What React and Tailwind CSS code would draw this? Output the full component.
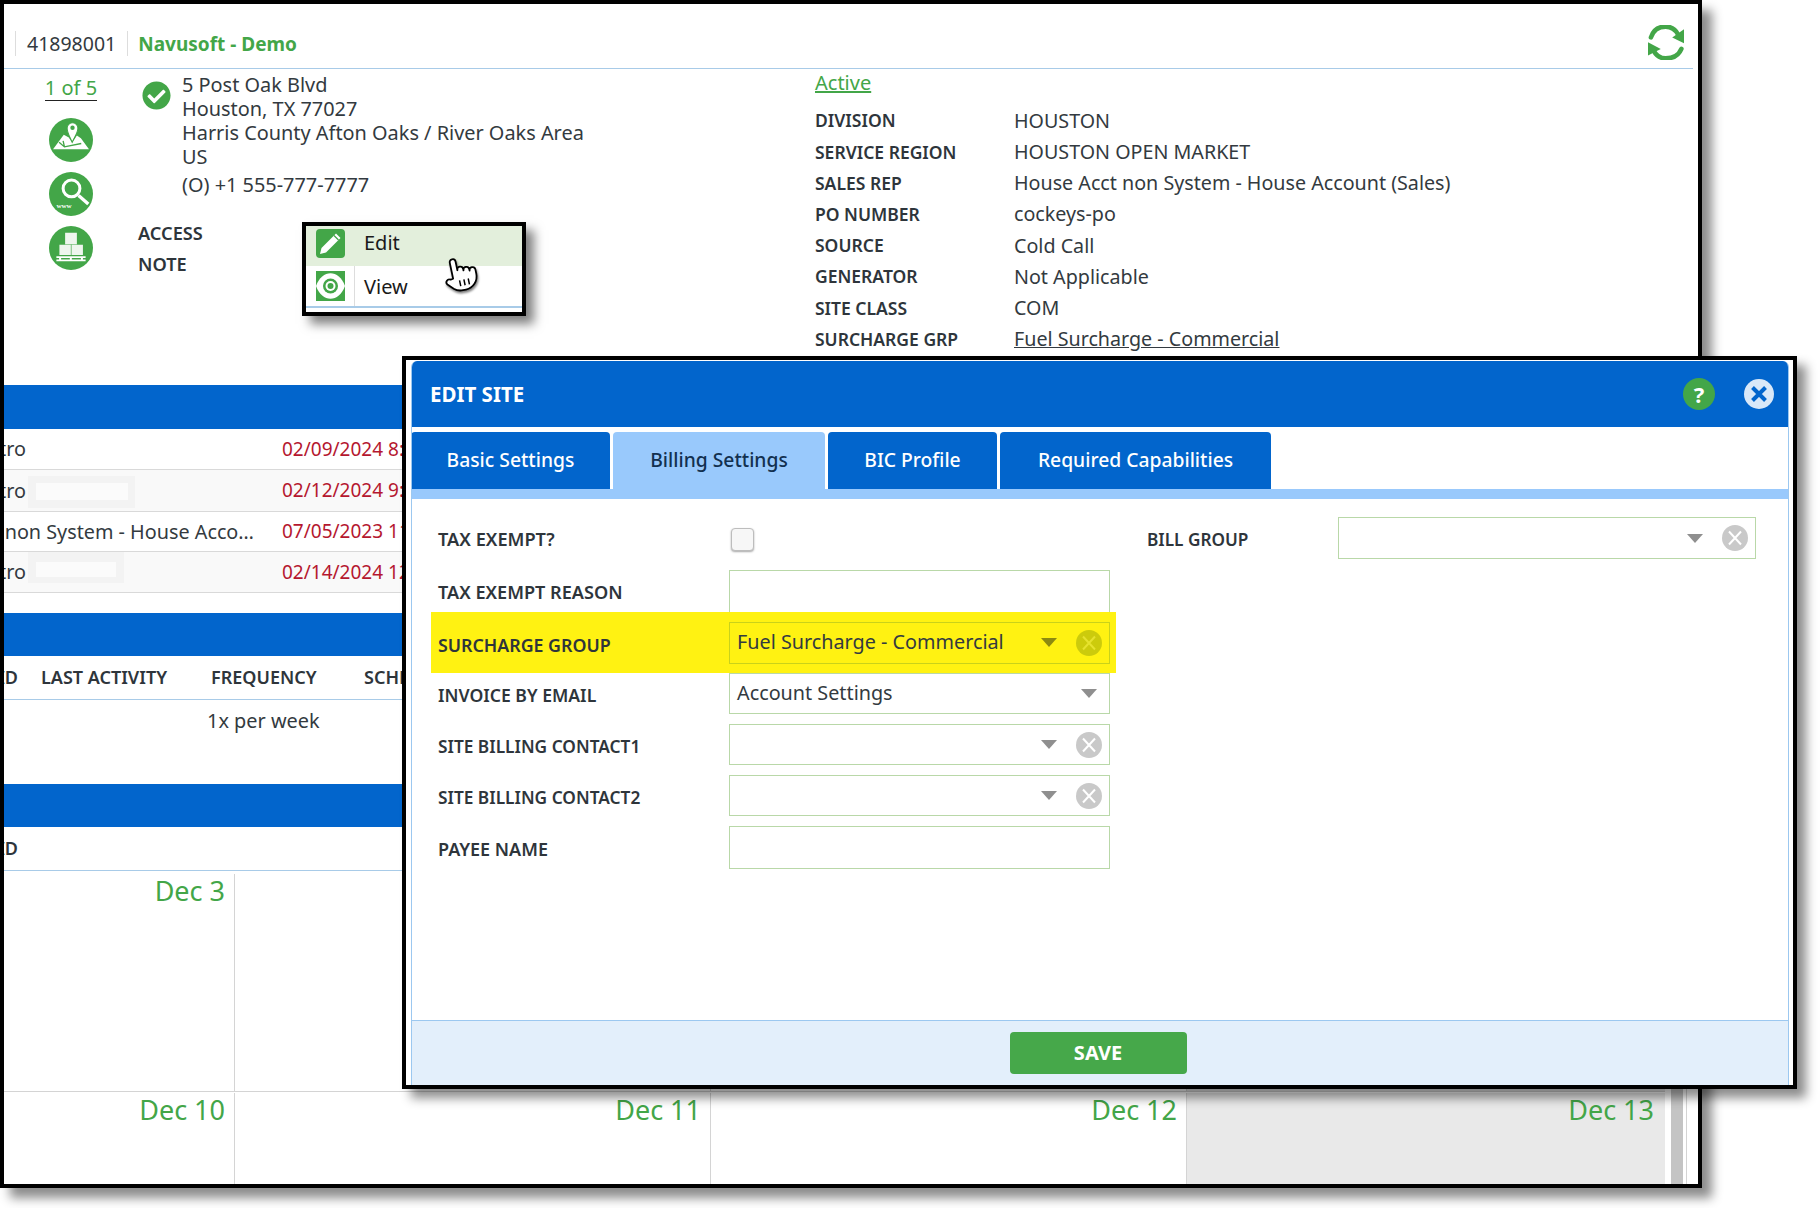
import { FaCheckCircle } from 'react-icons/fa'

const details = [
  ['DIVISION', 'HOUSTON'],
  ['SERVICE REGION', 'HOUSTON OPEN MARKET'],
  ['SALES REP', 'House Acct non System - House Account (Sales)'],
  ['PO NUMBER', 'cockeys-po'],
  ['SOURCE', 'Cold Call'],
  ['GENERATOR', 'Not Applicable'],
  ['SITE CLASS', 'COM'],
  ['SURCHARGE GRP', 'Fuel Surcharge - Commercial'],
]

function Arrow({ color = '#8f8f8f' }) {
  return (
    <svg width="16" height="9" viewBox="0 0 16 9" className="shrink-0">
      <path d="M0 0h16L8 9z" fill={color} />
    </svg>
  )
}

function ClearIcon({ bg = '#c9c9c9', fg = '#ffffff' }) {
  return (
    <svg width="26" height="26" viewBox="0 0 26 26" className="shrink-0">
      <circle cx="13" cy="13" r="13" fill={bg} />
      <path d="M7 6.500l12 13M19 6.500l-12 13" stroke={fg} strokeWidth="2" />
    </svg>
  )
}

function RefreshIcon() {
  return (
    <svg width="36" height="35" viewBox="0 0 110 105">
      <path d="M9 37C16 14 33 4 54 4c16 0 29 7 38 24" fill="none" stroke="#43a648" strokeWidth="14" strokeLinecap="round" />
      <path d="M110 12v43L74 37z" fill="#43a648" />
      <path d="M102 72C94 92 76 101 54 101c-16 0-29-8-37-24" fill="none" stroke="#43a648" strokeWidth="14" strokeLinecap="round" />
      <path d="M0 52v40l39-20z" fill="#43a648" />
    </svg>
  )
}

function MapIcon() {
  return (
    <svg width="44" height="44" viewBox="0 0 131 131">
      <circle cx="65.500" cy="65.500" r="65.500" fill="#43a648" />
      <path d="M12 93L44 50l15 8 10 16 14-22 12 8 24 33z" fill="#fff" />
      <path d="M30 72l16 14 50-10M46 86l-4-18" fill="none" stroke="#43a648" strokeWidth="4" />
      <path d="M69 72C62 56 54 45 54 30a16 16 0 0 1 32 0c0 15-10 26-17 42z" fill="#fff" stroke="#43a648" strokeWidth="3" />
      <circle cx="70" cy="29" r="6.500" fill="#43a648" />
    </svg>
  )
}

function WebSearchIcon() {
  return (
    <svg width="44" height="44" viewBox="0 0 131 131">
      <circle cx="65.500" cy="65.500" r="65.500" fill="#43a648" />
      <circle cx="67" cy="49" r="25" fill="none" stroke="#fff" strokeWidth="9" />
      <path d="M88 70l29 25" stroke="#fff" strokeWidth="10" />
      <text x="22" y="106" fontSize="21" fontWeight="700" fill="#fff" fontFamily="'Liberation Serif', serif">www</text>
    </svg>
  )
}

function PalletIcon() {
  return (
    <svg width="44" height="44" viewBox="0 0 131 131">
      <circle cx="65.500" cy="65.500" r="65.500" fill="#43a648" />
      <path d="M48 20h35v34H48zM31 56h34v30H31zM67 56h34v30H67z" fill="#eef6ee" />
      <path d="M22 90h87v5H22zM30 95h6v5h-6zM62 95h6v5h-6zM95 95h6v5h-6zM22 100h87v5H22z" fill="#fff" />
    </svg>
  )
}

function PencilIcon() {
  return (
    <svg width="29" height="29" viewBox="0 0 29 29">
      <rect width="29" height="29" rx="4" fill="#43a648" />
      <path d="M4 25l1.500-6L20 4.500 24.500 9 10 23.500z" fill="#fff" />
      <path d="M18 6.500L22.500 11" stroke="#43a648" strokeWidth="1.300" />
    </svg>
  )
}

function EyeIcon() {
  return (
    <svg width="29" height="30" viewBox="0 0 29 30">
      <rect width="29" height="30" fill="#43a648" />
      <path d="M0 15C6-2 23-2 29 15 23 32 6 32 0 15z" fill="#fff" />
      <circle cx="14.500" cy="15" r="7.500" fill="#43a648" />
      <circle cx="14.500" cy="15" r="5" fill="#fff" />
      <circle cx="14.500" cy="15" r="3" fill="#43a648" />
    </svg>
  )
}

function HandCursor() {
  return (
    <svg width="37" height="44" viewBox="0 0 25 27" className="absolute left-[136px] top-[27px] drop-shadow-[1px_2px_1px_rgba(0,0,0,0.5)]">
      <g transform="rotate(-12 12 13)">
        <path d="M7 15V4a2 2 0 0 1 4 0v6a2 2 0 0 1 4 0v1a2 2 0 0 1 4 0v1a2 2 0 0 1 4 0v3a9 9 0 0 1-9 9h-2c-2.800 0-4.500-.900-6-2.300l-3.600-3.600a2 2 0 0 1 2.800-2.800z" fill="#fff" stroke="#000" strokeWidth="1.200" strokeLinejoin="round" />
        <path d="M11 17v4M14 17v4M17 17v4" stroke="#000" strokeWidth="1" />
      </g>
    </svg>
  )
}

function PopupMenu() {
  return (
    <div className="absolute left-[298px] top-[218px] z-10 h-[94px] w-[224px] border-4 border-black bg-white shadow-[8px_8px_10px_rgba(0,0,0,0.5)]">
      <div className="flex h-[40px] items-start bg-[#e3efdc] pl-[10px] pt-[3px]">
        <PencilIcon />
        <span className="ml-[19px] text-[20px] leading-[27px] text-[#1a1a1a]">Edit</span>
      </div>
      <div className="flex h-[42px] items-center border-b-2 border-[#a8cbe8] pl-[10px]">
        <EyeIcon />
        <span className="ml-[9px] flex h-full items-center border-l border-[#dddddd] pl-[9px] pt-[2px] text-[20px] text-[#1a1a1a]">View</span>
      </div>
      <HandCursor />
    </div>
  )
}

function TopSection() {
  return (
    <div className="flex h-[316px] text-[#333a40]">
      <div className="flex w-[134px] shrink-0 flex-col items-center pt-[7px]">
        <a className="border-b border-[#222222] text-[20px] leading-[24px] text-[#43a648]">1 of 5</a>
        <div className="mt-[17px] flex flex-col gap-[10px]">
          <MapIcon />
          <WebSearchIcon />
          <PalletIcon />
        </div>
      </div>
      <div className="w-[677px] shrink-0 pt-[4px]">
        <div className="flex">
          <FaCheckCircle className="ml-[4px] mt-[8px] shrink-0 text-[29px] text-[#43a648]" />
          <div className="ml-[11px] text-[19.9px] leading-[24px]">
            <div>5 Post Oak Blvd</div>
            <div>Houston, TX 77027</div>
            <div>Harris County Afton Oaks / River Oaks Area</div>
            <div>US</div>
            <div className="mt-[4px]">(O) +1 555-777-7777</div>
          </div>
        </div>
        <div className="mt-[21px] text-[18.2px] font-semibold leading-[31px] text-[#2e353b]">
          <div>ACCESS</div>
          <div>NOTE</div>
        </div>
      </div>
      <div className="flex-1">
        <div className="-mt-px flex h-[30px] items-center">
          <a className="text-[20px] text-[#43a648] underline">Active</a>
        </div>
        <div className="mt-[7px]">
          {details.map(([label, value], i) => (
            <div key={label} className="flex h-[31.2px] items-center">
              <span className="w-[199px] shrink-0 text-[17.5px] font-semibold text-[#2e353b]">{label}</span>
              <span className={i === 7 ? 'text-[19.7px] underline' : 'text-[19.7px]'}>{value}</span>
            </div>
          ))}
        </div>
      </div>
    </div>
  )
}

function Redacted({ width, inner, top, innerTop, height, innerHeight }) {
  return (
    <span className={`absolute left-[24px] bg-[#f3f3f3] ${top} ${width} ${height}`}>
      <span className={`absolute left-[8px] block bg-[#fbfbfb] ${inner} ${innerTop} ${innerHeight}`} />
    </span>
  )
}

function ActivityTable() {
  const rows = [
    { name: 'Metro', date: '02/09/2024 8:00 AM', h: 'h-[41px]', w: 'w-[22px]' },
    { name: 'Metro', date: '02/12/2024 9:00 AM', h: 'h-[42px]', bg: 'bg-[#f9f9f9]', redact: 2, w: 'w-[22px]' },
    { name: 'House Acct non System - House Acco…', date: '07/05/2023 11:00 AM', h: 'h-[40px]', w: 'w-[250px]' },
    { name: 'Metro', date: '02/14/2024 12:00 PM', h: 'h-[41px]', bg: 'bg-[#f9f9f9]', redact: 4, w: 'w-[22px]' },
  ]
  return (
    <>
      <div className="h-[44px] bg-[#0265cc]" />
      {rows.map((r) => (
        <div key={r.date} className={`relative flex items-center overflow-hidden border-b border-[#d9d9d9] text-[19.8px] text-[#333a40] ${r.h} ${r.bg || ''}`}>
          <div className="w-[278px] shrink-0">
            <div className={`flex justify-end overflow-hidden whitespace-nowrap ${r.w}`}>
              <span className="shrink-0">{r.name}</span>
            </div>
          </div>
          <span className="whitespace-nowrap text-[19px] text-[#b5172f]">{r.date}</span>
          {r.redact === 2 && <Redacted width="w-[107px]" inner="w-[92px]" top="top-[6px]" innerTop="top-[7px]" height="h-[32px]" innerHeight="h-[17px]" />}
          {r.redact === 4 && <Redacted width="w-[96px]" inner="w-[80px]" top="top-0" innerTop="top-[10px]" height="h-[31px]" innerHeight="h-[15px]" />}
        </div>
      ))}
    </>
  )
}

function ClippedId() {
  return (
    <div className="flex w-[14px] shrink-0 justify-end overflow-hidden">
      <span className="shrink-0">ID</span>
    </div>
  )
}

function ScheduleTable() {
  return (
    <>
      <div className="mt-[20px] h-[43px] bg-[#0265cc]" />
      <div className="flex h-[44px] items-center whitespace-nowrap border-b border-[#a8cbe8] text-[18px] font-semibold text-[#2e353b]">
        <ClippedId />
        <span className="ml-[23px] w-[170px] shrink-0">LAST ACTIVITY</span>
        <span className="w-[153px] shrink-0">FREQUENCY</span>
        <span>SCHEDULE</span>
      </div>
      <div className="flex h-[41px] items-center whitespace-nowrap pt-px text-[19.9px] text-[#333a40]">
        <span className="w-[203px] shrink-0" />
        <span className="w-[198px] shrink-0">1x per week</span>
        <span>1</span>
      </div>
      <div className="mt-[43px] h-[43px] bg-[#0265cc]" />
      <div className="flex h-[44px] items-center border-b border-[#a8cbe8] text-[18px] font-semibold text-[#2e353b]">
        <ClippedId />
      </div>
    </>
  )
}

function DayCell({ label, grey, first }) {
  return (
    <div className={`text-right text-[27px] leading-[34px] text-[#43a648] ${first ? '' : 'border-l border-[#d4d4d4]'} ${grey ? 'bg-[#e9e9e9] pr-[11px]' : 'pr-[9px]'}`}>
      {label}
    </div>
  )
}

function Calendar() {
  return (
    <div className="flex h-[313px] pr-[6px]">
      <div className="grid flex-1 grid-cols-[230px_476px_476px_479px] grid-rows-[221px_92px]">
        <div className="col-span-4 grid grid-cols-subgrid border-b border-[#d4d4d4] pt-[3px]">
          <DayCell first label="Dec 3" />
          <DayCell label="Dec 4" />
          <DayCell label="Dec 5" />
          <DayCell grey label="Dec 6" />
        </div>
        <div className="col-span-4 grid grid-cols-subgrid pt-px">
          <DayCell first label="Dec 10" />
          <DayCell label="Dec 11" />
          <DayCell label="Dec 12" />
          <DayCell grey label="Dec 13" />
        </div>
      </div>
      <div className="ml-[6px] w-[16px] bg-[#c4c4c4]" />
      <div className="w-[5px] border-r border-[#d4d4d4]" />
    </div>
  )
}

function Field({ children, width = 'w-[381px]', height = 'h-[41px]', border = 'border-[#b9d8a8]', bg = 'bg-white' }) {
  return (
    <div className={`flex shrink-0 items-center border pl-[7px] pr-[6px] text-[19.8px] text-[#333a40] ${width} ${height} ${border} ${bg}`}>
      {children}
    </div>
  )
}

function FormRow({ label, children, className = '', labelClass = 'mt-[4px] text-[17.7px]' }) {
  return (
    <div className={`flex items-center ${className}`}>
      <span className={`w-[291px] shrink-0 font-semibold text-[#2e353b] ${labelClass}`}>{label}</span>
      {children}
    </div>
  )
}

function SelectControls() {
  return (
    <div className="ml-auto mr-px flex items-center gap-[19px]">
      <Arrow />
      <ClearIcon />
    </div>
  )
}

function EditSiteModal() {
  const tabs = [
    ['Basic Settings', 'w-[199px]'],
    ['Billing Settings', 'w-[212px]'],
    ['BIC Profile', 'w-[169px]'],
    ['Required Capabilities', 'w-[271px]'],
  ]
  return (
    <div className="absolute left-[402px] top-[356px] z-20 h-[733px] w-[1395px] border-4 border-black bg-white pl-[5px] pt-px shadow-[9px_9px_10px_rgba(0,0,0,0.45)]">
      <div className="flex h-full w-[1378px] flex-col overflow-hidden rounded-t-[6px] border-x border-[#9cc8f0]">
        <div className="-mx-px flex h-[66px] shrink-0 items-center bg-[#0265cc] pl-[19px] pr-[15px]">
          <span className="text-[20.5px] font-bold text-white">EDIT SITE</span>
          <div className="ml-auto flex size-[32px] items-center justify-center rounded-full bg-[#43a648] text-[22px] font-bold text-white">?</div>
          <svg width="30" height="30" viewBox="0 0 30 30" className="ml-[29px]">
            <circle cx="15" cy="15" r="15" fill="#d9e8f8" />
            <path d="M8.500 8.500l13 13M21.500 8.500l-13 13" stroke="#0265cc" strokeWidth="4" />
          </svg>
        </div>
        <div className="-mx-px mt-[5px] flex h-[57px] shrink-0 gap-[3px]">
          {tabs.map(([name, w], i) => (
            <div key={name} className={`flex items-center justify-center rounded-t-[4px] text-[19.3px] font-medium ${w} ${i === 1 ? 'bg-[#99c9fc] text-[#12304f]' : 'bg-[#0265cc] text-white'}`}>
              {name}
            </div>
          ))}
        </div>
        <div className="-mx-px h-[10px] shrink-0 bg-[#99c9fc]" />
        <div className="flex flex-1 pl-[19px]">
          <div className="w-[685px] shrink-0 pt-[18px]">
            <div className="px-[7px]">
              <FormRow label="TAX EXEMPT?" className="h-[42px]" labelClass="mt-[3px] text-[18.2px]">
                <div className="ml-[2px] mt-[2px] size-[23px] rounded-[4px] border border-[#bdbdbd] bg-[#f7f7f7] shadow-[0_1px_2px_rgba(0,0,0,0.35)]" />
              </FormRow>
              <FormRow label="TAX EXEMPT REASON" className="mt-[11px]" labelClass="mt-[3px] text-[18.1px]">
                <Field height="h-[43px]" />
              </FormRow>
            </div>
            <div className="relative -mt-px flex h-[61px] items-center bg-[#fff212] px-[7px]">
              <span className="mt-[6px] w-[291px] shrink-0 text-[17.8px] font-semibold text-[#2e353b]">SURCHARGE GROUP</span>
              <Field height="h-[42px]" border="border-[#c9d21a]" bg="bg-transparent">
                <span className="-mt-[2px] whitespace-nowrap">Fuel Surcharge - Commercial</span>
                <div className="ml-auto mr-px flex items-center gap-[19px]">
                  <Arrow color="#8c8a10" />
                  <ClearIcon bg="#cccb0c" fg="#e6e22e" />
                </div>
              </Field>
            </div>
            <div className="px-[7px]">
              <FormRow label="INVOICE BY EMAIL" labelClass="mt-[4px] text-[17.6px]">
                <Field>
                  <span className="-mt-[2px] whitespace-nowrap">Account Settings</span>
                  <div className="ml-auto mr-[6px]"><Arrow /></div>
                </Field>
              </FormRow>
              <FormRow label="SITE BILLING CONTACT1" className="mt-[10px]" labelClass="mt-[4px] text-[17.3px]">
                <Field><SelectControls /></Field>
              </FormRow>
              <FormRow label="SITE BILLING CONTACT2" className="mt-[10px]" labelClass="mt-[4px] text-[17.3px]">
                <Field><SelectControls /></Field>
              </FormRow>
              <FormRow label="PAYEE NAME" className="mt-[10px]" labelClass="mt-[3px] text-[18px]">
                <Field height="h-[43px]" />
              </FormRow>
            </div>
          </div>
          <div className="ml-[31px] mt-[18px] flex h-[42px] items-center">
            <span className="mt-[3px] w-[191px] shrink-0 text-[17.2px] font-semibold text-[#2e353b]">BILL GROUP</span>
            <Field width="w-[418px]" height="h-[42px]"><SelectControls /></Field>
          </div>
        </div>
        <div className="flex h-[65px] shrink-0 justify-center border-t border-[#9cc8f0] bg-[#e3effb] pr-[4px] pt-[11px]">
          <button className="h-[42px] w-[177px] rounded-[4px] bg-[#46a84a] text-[20px] font-bold text-white">SAVE</button>
        </div>
      </div>
    </div>
  )
}

export default function App() {
  return (
    <div className="relative h-[1208px] w-[1818px] overflow-hidden bg-white font-['Noto_Sans','Open_Sans',sans-serif]">
      <div className="relative h-[1188px] w-[1702px] overflow-hidden border-4 border-black bg-white pr-[5px]">
        <header className="flex h-[65px] items-center border-b border-[#a8cbe8] pl-[11px] pr-[9px] pt-[14px]">
          <span className="border-x border-[#dddddd] px-[11px] text-[19.5px] leading-[25px] text-[#333a40]">41898001</span>
          <span className="ml-[10px] mt-[2px] text-[19px] font-bold text-[#43a648]">Navusoft - Demo</span>
          <div className="mb-[2px] ml-auto"><RefreshIcon /></div>
        </header>
        <TopSection />
        <ActivityTable />
        <ScheduleTable />
        <Calendar />
        <PopupMenu />
      </div>
      <div className="pointer-events-none absolute left-0 top-0 h-[1188px] w-[1702px] shadow-[10px_10px_10px_rgba(0,0,0,0.45)]" />
      <EditSiteModal />
    </div>
  )
}
